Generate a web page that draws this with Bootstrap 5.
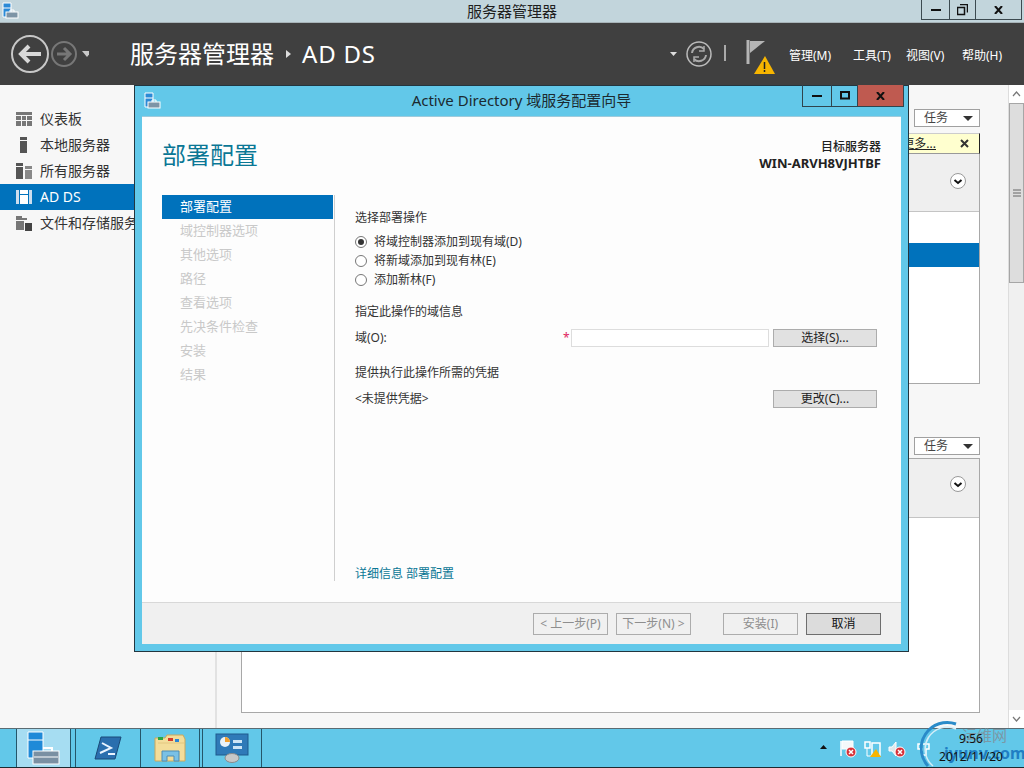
<!DOCTYPE html>
<html lang="zh-CN"><head><meta charset="utf-8"><title>服务器管理器</title>
<link href="https://cdn.jsdelivr.net/npm/bootstrap@5.3.0/dist/css/bootstrap.min.css" rel="stylesheet">
<style>
html,body{height:768px;overflow:hidden}
body{font:12px/16px "Noto Sans","Noto Sans CJK SC",sans-serif;color:#333;background:#f5f5f5}
.shell{width:1024px;height:768px;position:relative}
.app-title{height:23px;background:#c2d5dc;border-bottom:1px solid #a8b4b9;font-size:15px;line-height:22px;color:#1e1e1e;position:relative;text-align:center}
.app-title>svg{position:absolute;left:1px;top:2px}
.win-ctl{position:absolute;right:2px;top:0;height:20px;border:1px solid #3c4a50;border-top:0;display:flex}
.win-ctl span{display:flex;align-items:center;justify-content:center;border-left:1px solid #3c4a50}
.win-ctl span:first-child{border-left:0}
.app-head{height:62px;background:#404040;color:#fff;padding-left:11px}
.crumb{font-size:24px;line-height:32px;margin-left:41px;color:#fff}
.crumb-sep{width:0;height:0;border:4px solid transparent;border-left:5px solid #ddd;border-right:0;margin:0 11px 0 12px}
.crumb-end{letter-spacing:.8px}
.menu-item{position:absolute;top:48px;color:#fff;line-height:16px;white-space:nowrap}
.app-body{height:643px}
.side{width:217px;border-right:2px solid #e2e2e2;padding-top:21px;background:#f7f7f7}
.side-item{height:26px;padding-left:16px;display:flex;align-items:center;gap:8px;font-size:14px;white-space:nowrap;color:#333}
.side-item.on{background:#0072bc;color:#fff}
.work{width:791px;padding:24px 28px 0 24px;background:#f7f7f7}
.task-btn{width:66px;height:18px;border:1px solid #a0a0a0;background:#fff;margin-left:auto;display:flex;align-items:center;justify-content:space-between;padding:0 6px 0 9px;color:#444;line-height:14px}
.tri{width:0;height:0;border:5px solid transparent;border-top:5px solid #333;border-bottom:0}
.panel-a{margin-top:6px;height:251px;border:1px solid #a8a8a8;border-top:0;background:#fff}
.warn-bar{height:21px;background:#ffffcf;border-top:1px solid #ccc;border-bottom:1px solid #999;border-right:1px solid #222;display:flex;justify-content:flex-end;align-items:center;gap:24px;padding-right:10px;color:#222;margin-right:-1px}
.gray-bar{height:58px;background:#efefef;border-bottom:1px solid #c4c4c4;display:flex;justify-content:flex-end;padding:18px 12px 0 0}
.sel-row{height:24px;background:#0072bc;margin-top:31px}
.panel-b{margin-top:3px;height:255px;border:1px solid #a8a8a8;background:#fff}
.panel-b .gray-bar{height:59px;padding-top:16px}
.scroll{width:16px;background:#f0f0f0;display:flex;flex-direction:column;border-left:1px solid #ddd}
.scroll-btn{height:18px;background:#fff;display:flex;align-items:center;justify-content:center}
.scroll-thumb{height:180px;background:#ddd;border:1px solid #a6a6a6;display:flex;align-items:center;justify-content:center}
.task-bar{height:40px;background:#62c8e9;border-top:1px solid #5b6b72;border-bottom:1px solid #1d2a30;padding-left:16px}
.tb{height:38px;border-left:1px solid #24566a;display:flex;align-items:center;justify-content:center}
.tb.on{background:#a6ddf2}
.tb.end{width:1px;padding:0}
.tray-icons{position:absolute;top:740px;left:820px}
.wm-arc{position:absolute;left:920px;top:720px}
.wm-cn{position:absolute;left:962px;top:726px;font-size:15px;line-height:18px;white-space:nowrap;color:#7a98a6}
.wm-en{position:absolute;left:944px;top:743px;font-weight:700;font-size:16px;line-height:20px;color:#1f7fc4;white-space:nowrap}
.clock-box{position:absolute;left:930px;width:82px;top:730px;text-align:center;color:#111;line-height:18px;font-size:12px}
.wiz{position:absolute;left:134px;top:85px;width:775px;height:567px;background:#62c8e9;border:1px solid #23363f;padding:30px 7px 7px 7px}
.wiz-cap{position:absolute;left:0;right:0;top:0;height:30px;text-align:center;font-size:15px;line-height:29px;color:#1c2a30}
.wiz-cap>svg{position:absolute;left:8px;top:6px}
.wiz-ctl{position:absolute;left:667px;top:-1px;height:22px;display:flex;border:1px solid #30444d;border-top:0}
.wiz-ctl span{display:flex;align-items:center;justify-content:center;border-left:1px solid #30444d}
.wiz-ctl span:first-child{border-left:0}
.wiz-ctl .x{background:#bf5a50}
.wiz-in{height:528px;background:#fdfdfd;border-top:1px solid #9fcbdc;display:flex;flex-direction:column}
.wiz-main{height:485px;position:relative}
.wiz-h{font-size:24px;line-height:32px;color:#0a7795;padding:22px 0 0 20px;height:78px}
.target{position:absolute;right:20px;top:22px;text-align:right;color:#222;line-height:16px;font-weight:500}
.target b{font-weight:700;font-size:13px}
.steps{width:171px;margin-left:20px;font-size:13px}
.step-item{height:24px;line-height:23px;padding-left:18px;color:#c9c9c9}
.step-item.on{background:#0072bc;color:#fff}
.vline{width:1px;height:386px;background:#cfcfcf;margin-left:1px}
.form-area{padding:15px 0 0 20px;width:546px;color:#333}
.line-text{line-height:16px;white-space:nowrap}
.radio-row{height:19px;display:flex;align-items:center;gap:7px;white-space:nowrap}
.dot{width:12px;height:12px;border:1px solid #777;border-radius:50%;background:#fff;display:flex;align-items:center;justify-content:center}
.dot.on::after{content:"";width:6px;height:6px;border-radius:50%;background:#333}
.win-btn{background:#e1e1e1;border:1px solid #acacac;border-radius:0;color:#222;font-size:12px;line-height:14px;padding:0;height:18px;width:104px;flex:none}
.field{height:18px;width:198px;border:1px solid #ddd;background:#fff;flex:none}
.row-line{display:flex;align-items:center;height:18px;width:522px;gap:4px;white-space:nowrap}
.star{color:#e0245e;margin-left:auto;margin-right:-2px;width:6px}
.wiz-link{position:absolute;left:213px;top:449px;color:#0a7795;text-decoration:none}
.wiz-foot{height:42px;background:#f0f0f0;border-top:1px solid #d8d8d8;display:flex;align-items:center;justify-content:flex-end;padding:0 20px 0 0}
.foot-btn{width:75px;height:22px;border:1px solid #acacac;background:#f0f0f0;color:#8e8e8e;font-size:12px;padding:0;border-radius:0;line-height:18px}
.foot-btn.go{background:#dcdcdc;border-color:#6e6e6e;color:#111}
.ms8{margin-left:8px}.ms32{margin-left:32px}
</style></head><body>
<div class="shell">
 <div class="app-title">
  <svg width="18" height="18" viewBox="0 0 18 18"><path d="M2 1h8v14H2z" fill="#2b8ad6" stroke="#fff"/><path d="M2 6h8" stroke="#fff"/><rect x="5" y="10" width="12" height="6" fill="#7d94a6" stroke="#fff"/><path d="M9 10V8h4v2" fill="none" stroke="#fff"/></svg>
  服务器管理器
  <div class="win-ctl">
   <span style="width:27px"><svg width="10" height="3"><rect width="10" height="2" y="1" fill="#111"/></svg></span>
   <span style="width:26px"><svg width="11" height="12"><path d="M3 .5h7.500v8M.5 3.500h7v7h-7z" fill="none" stroke="#111" stroke-width="1.500"/></svg></span>
   <span style="width:46px"><svg width="9" height="8"><path d="M1 0l7 8M8 0L1 8" stroke="#111" stroke-width="2"/></svg></span>
  </div>
 </div>
 <div class="app-head d-flex align-items-center">
  <svg width="78" height="38" viewBox="0 0 78 38"><circle cx="19" cy="19" r="18" fill="none" stroke="#c8c8c8" stroke-width="2"/><path d="M30 19H10M18 11l-8 8 8 8" fill="none" stroke="#d8d8d8" stroke-width="4"/><circle cx="53" cy="19" r="12" fill="none" stroke="#777" stroke-width="2"/><path d="M46 19h13M53 13l6 6-6 6" fill="none" stroke="#777" stroke-width="3"/><path d="M71 16h10l-5 6z" fill="#c8c8c8"/></svg>
  <div class="crumb d-flex align-items-center">服务器管理器<span class="crumb-sep"></span><span class="crumb-end">AD DS</span></div>
 </div>
 <svg style="position:absolute;left:669px;top:40px" width="110" height="36" viewBox="0 0 110 36"><path d="M1 12h7l-3.500 4z" fill="#ddd"/><circle cx="30" cy="14" r="12" fill="none" stroke="#bbb" stroke-width="1.500"/><path d="M23 13a7 7 0 0 1 12-4M37 15a7 7 0 0 1-12 4" fill="none" stroke="#aaa" stroke-width="2"/><path d="M35 6v5h-5M25 22v-5h5" fill="none" stroke="#aaa" stroke-width="1.500"/><path d="M56 5v16" stroke="#aaa" stroke-width="2"/><path d="M79 0v24" stroke="#b5b5b5" stroke-width="3"/><path d="M81 1h15L81 13z" fill="#b5b5b5"/><path d="M96 16l10 18H85z" fill="#f7b500"/><path d="M95.500 22v7M95.500 30v2" stroke="#222" stroke-width="1.500"/></svg>
 <span class="menu-item" style="left:789px">管理(M)</span><span class="menu-item" style="left:853px">工具(T)</span><span class="menu-item" style="left:906px">视图(V)</span><span class="menu-item" style="left:962px">帮助(H)</span>

 <div class="app-body d-flex">
  <div class="side">
   <div class="side-item"><svg width="16" height="16"><path d="M0 1h16v3H0zM0 5h5v4H0zM6 5h4v4H6zM11 5h5v4h-5zM0 10h5v5H0zM6 10h4v5H6zM11 10h5v5h-5z" fill="#777"/></svg>仪表板</div>
   <div class="side-item"><svg width="16" height="16"><path d="M4 0h7v3H4zM4 4h7v12H4z" fill="#555"/></svg>本地服务器</div>
   <div class="side-item"><svg width="16" height="16"><path d="M0 0h7v3H0zM0 4h7v12H0z" fill="#555"/><path d="M9 3h7v3H9zM9 7h7v9H9z" fill="#888"/></svg>所有服务器</div>
   <div class="side-item on"><svg width="16" height="16"><path d="M0 1h3v14H0zM13 1h3v14h-3z" fill="#cde"/><path d="M4 1h8v4H4zM4 6h8v9H4z" fill="#fff"/></svg>AD DS</div>
   <div class="side-item"><svg width="16" height="16"><path d="M0 1h6v2h5v2H0zM0 6h8v9H0z" fill="#777"/><path d="M9 8h7v8H9z" fill="#444"/></svg>文件和存储服务</div>
  </div>
  <div class="work">
   <div class="task-btn">任务<span class="tri"></span></div>
   <div class="panel-a">
    <div class="warn-bar"><u>更多...</u><svg width="9" height="9"><path d="M1 1l7 7M8 1L1 8" stroke="#333" stroke-width="2"/></svg></div>
    <div class="gray-bar"><svg width="18" height="18"><circle cx="9" cy="9" r="7.500" fill="#fff" stroke="#999"/><path d="M5.500 8l3.500 3 3.500-3" fill="none" stroke="#111" stroke-width="2"/></svg></div>
    <div class="sel-row"></div>
   </div>
   <div style="height:53px"></div>
   <div class="task-btn">任务<span class="tri"></span></div>
   <div class="panel-b"><div class="gray-bar"><svg width="18" height="18"><circle cx="9" cy="9" r="7.500" fill="#fff" stroke="#999"/><path d="M5.500 8l3.500 3 3.500-3" fill="none" stroke="#111" stroke-width="2"/></svg></div></div>
  </div>
  <div class="scroll">
   <div class="scroll-btn"><svg width="9" height="6"><path d="M1 5l3.500-4L8 5" fill="none" stroke="#777" stroke-width="1.200"/></svg></div>
   <div class="scroll-thumb"><svg width="8" height="8"><path d="M0 1h8M0 4h8M0 7h8" stroke="#666"/></svg></div>
   <div class="flex-grow-1"></div>
   <div class="scroll-btn"><svg width="9" height="6"><path d="M1 1l3.500 4L8 1" fill="none" stroke="#777" stroke-width="1.200"/></svg></div>
  </div>
 </div>

 <div class="task-bar d-flex">
  <div class="tb on" style="width:54px"><svg width="34" height="36" viewBox="0 0 34 36"><path d="M1 2h15v26H1z" fill="#1f8ad8" stroke="#fff"/><path d="M1 10h15" stroke="#fff"/><path d="M16 18h9v4" fill="none" stroke="#fff" stroke-width="2"/><rect x="6" y="21" width="26" height="13" fill="#7a90a3" stroke="#fff"/><path d="M7 27h24" stroke="#fff"/></svg></div>
  <div class="tb" style="width:5px"></div>
  <div class="tb" style="width:65px"><svg width="28" height="24" viewBox="0 0 28 24"><path d="M7 1h20l-6 22H1z" fill="#2a6fae" stroke="#1a4a78"/><path d="M8 7l9 5-11 5M14 18h7" fill="none" stroke="#eaf4ff" stroke-width="2"/></svg></div>
  <div class="tb" style="width:59px"><svg width="34" height="30" viewBox="0 0 34 30"><path d="M2 5h10l2-3h16l2 4v22H2z" fill="#f3dd9a" stroke="#caa85c"/><path d="M5 4h5v3H5z" fill="#2aa845"/><path d="M15 5h5v3h-5z" fill="#d63a2a"/><path d="M22 6h4v3h-4z" fill="#2a86d6"/><path d="M5 10h26" stroke="#e2c780"/><path d="M9 28V18h17v10h-5v-5h-7v5z" fill="#7ac1e6" stroke="#4d8db5"/></svg></div>
  <div class="tb" style="width:3px"></div>
  <div class="tb" style="width:59px"><svg width="34" height="30" viewBox="0 0 34 30"><rect x="1" y="1" width="32" height="21" fill="#2f7ab8" stroke="#1f5a8d"/><circle cx="10" cy="9" r="5" fill="#e9f2f8"/><path d="M10 4a5 5 0 0 1 5 5h-5z" fill="#f0a030"/><path d="M18 7h9v3h-9zM18 13h9v3h-9z" fill="#cfe6f6"/><ellipse cx="17" cy="25" rx="7" ry="4.500" fill="#c8c8c8" stroke="#8a8a8a"/></svg></div>
  <div class="tb end"></div>
 </div>

 <svg class="tray-icons" width="112" height="18" viewBox="0 0 112 18"><path d="M0 9h7L3.500 5z" fill="#111"/><path d="M21 1v15" stroke="#fff" stroke-width="1.500"/><path d="M22 1h11v8H22z" fill="#f4f8fa" stroke="#fff"/><circle cx="31" cy="12" r="5" fill="#d8323a" stroke="#fff"/><path d="M29 10l4 4M33 10l-4 4" stroke="#fff" stroke-width="1.500"/><path d="M45 2h5v6h-5zM52 3h8v12h-8z" fill="none" stroke="#fff" stroke-width="1.500"/><path d="M47 8v8h4" fill="none" stroke="#fff"/><path d="M56 9l5 8H50z" fill="#f7b500"/><path d="M69 7h3l4-5v14l-4-5h-3z" fill="#dfe8ec" stroke="#fff"/><circle cx="80" cy="12" r="5" fill="#d8323a" stroke="#fff"/><path d="M78 10l4 4M82 10l-4 4" stroke="#fff" stroke-width="1.500"/><path d="M98 4h11v5h-3v6h-4V9h-4z" fill="none" stroke="#fff" stroke-width="1.500"/></svg>
 <svg class="wm-arc" width="40" height="47" viewBox="0 0 40 47"><path d="M36 4A26 26 0 0 0 8 46" fill="none" stroke="#2a8bc9" stroke-width="3"/><path d="M36 9A22 22 0 0 0 13 46" fill="none" stroke="#d4eef8" stroke-width="1.500"/></svg>
 <span class="wm-cn">运维网</span><span class="wm-en">iyunv.com</span>
 <div class="clock-box">9:56<br>2012/11/20</div>

 <div class="wiz">
  <div class="wiz-cap"><svg width="18" height="18" viewBox="0 0 18 18"><path d="M2 1h8v14H2z" fill="#2b8ad6" stroke="#fff"/><path d="M2 6h8" stroke="#fff"/><rect x="5" y="10" width="12" height="6" fill="#7d94a6" stroke="#fff"/><path d="M9 10V8h4v2" fill="none" stroke="#fff"/></svg>Active Directory 域服务配置向导</div>
  <div class="wiz-ctl">
   <span style="width:28px"><svg width="10" height="3"><rect width="10" height="2" y="1" fill="#111"/></svg></span>
   <span style="width:26px"><svg width="10" height="9"><rect x="1" y="1" width="8" height="6.500" fill="none" stroke="#111" stroke-width="2"/></svg></span>
   <span class="x" style="width:46px"><svg width="9" height="8"><path d="M1 0l7 8M8 0L1 8" stroke="#111" stroke-width="2"/></svg></span>
  </div>
  <div class="wiz-in">
   <div class="wiz-main">
    <div class="wiz-h">部署配置</div>
    <div class="target">目标服务器<br><b>WIN-ARVH8VJHTBF</b></div>
    <div class="d-flex">
     <div class="steps">
      <div class="step-item on">部署配置</div><div class="step-item">域控制器选项</div><div class="step-item">其他选项</div><div class="step-item">路径</div><div class="step-item">查看选项</div><div class="step-item">先决条件检查</div><div class="step-item">安装</div><div class="step-item">结果</div>
     </div>
     <div class="vline"></div>
     <div class="form-area">
      <div class="line-text" style="margin-bottom:6px">选择部署操作</div>
      <div class="radio-row"><span class="dot on"></span>将域控制器添加到现有域(D)</div>
      <div class="radio-row"><span class="dot"></span>将新域添加到现有林(E)</div>
      <div class="radio-row"><span class="dot"></span>添加新林(F)</div>
      <div class="line-text" style="margin-top:15px;margin-bottom:9px">指定此操作的域信息</div>
      <div class="row-line"><span>域(O):</span><span class="star">*</span><span class="field"></span><button class="btn win-btn" type="button">选择(S)...</button></div>
      <div class="line-text" style="margin-top:18px;margin-bottom:9px">提供执行此操作所需的凭据</div>
      <div class="row-line" style="justify-content:space-between"><span>&lt;未提供凭据&gt;</span><button class="btn win-btn" type="button">更改(C)...</button></div>
     </div>
    </div>
    <a class="wiz-link" href="#">详细信息 部署配置</a>
   </div>
   <div class="wiz-foot">
    <button class="btn foot-btn" type="button">&lt; 上一步(P)</button><button class="btn foot-btn ms8" type="button">下一步(N) &gt;</button><button class="btn foot-btn ms32" type="button">安装(I)</button><button class="btn foot-btn go ms8" type="button">取消</button>
   </div>
  </div>
 </div>
</div>
<script src="https://cdn.jsdelivr.net/npm/bootstrap@5.3.0/dist/js/bootstrap.bundle.min.js"></script>
</body></html>
